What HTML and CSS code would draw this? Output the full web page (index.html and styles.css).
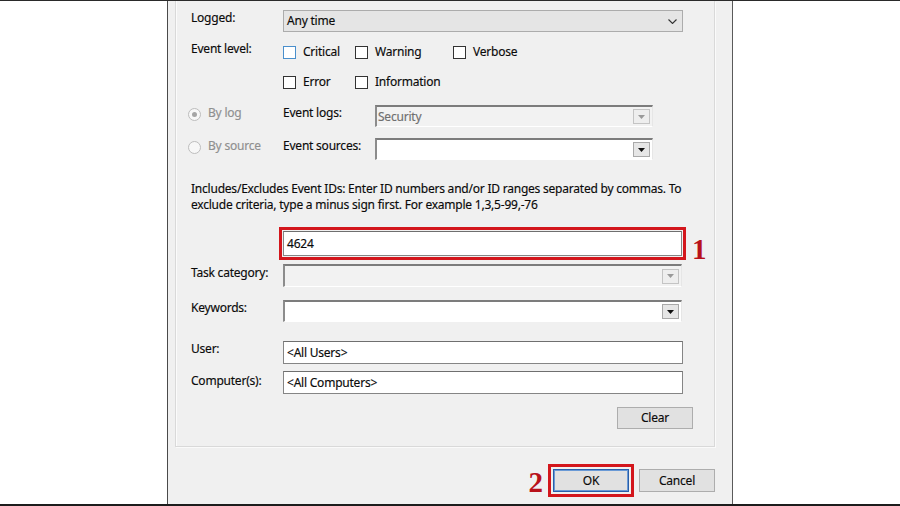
FILE: index.html
```html
<!DOCTYPE html>
<html>
<head>
<meta charset="utf-8">
<title>Filter Current Log</title>
<link rel="stylesheet" href="styles.css">
</head>
<body>
<div class="screen">
  <div class="dialog">
    <div class="panel">
      <div class="row row-logged">
        <span class="label">Logged:</span>
        <div class="combo w400 h22">
          <span class="combo-text">Any time</span>
          <svg class="chev" width="9" height="5" viewBox="0 0 9 5"><path d="M0.5 0.5 L4.5 4.5 L8.5 0.5" fill="none" stroke="#333" stroke-width="1.1"/></svg>
        </div>
      </div>

      <div class="row row-level">
        <span class="label lbl-down1">Event level:</span>
        <div class="checks">
          <label class="chk"><span class="box box-focus"></span>Critical</label>
          <label class="chk"><span class="box"></span>Warning</label>
          <label class="chk"><span class="box"></span>Verbose</label>
          <label class="chk"><span class="box"></span>Error</label>
          <label class="chk"><span class="box"></span>Information</label>
        </div>
      </div>

      <div class="row row-bylog">
        <label class="radio disabled"><span class="circle checked"></span>By log</label>
        <span class="label">Event logs:</span>
        <div class="drop drop-disabled w278">
          <span class="drop-text">Security</span>
          <span class="arrow arrow-disabled"><svg width="7" height="4" viewBox="0 0 7 4"><path d="M0 0 H7 L3.5 4 Z" fill="#9a9a9a"/></svg></span>
        </div>
      </div>

      <div class="row row-bysource">
        <label class="radio disabled"><span class="circle"></span>By source</label>
        <span class="label">Event sources:</span>
        <div class="drop w278">
          <span class="drop-text"></span>
          <span class="arrow"><svg width="7" height="4" viewBox="0 0 7 4"><path d="M0 0 H7 L3.5 4 Z" fill="#111"/></svg></span>
        </div>
      </div>

      <p class="hint">Includes/Excludes Event IDs: Enter ID numbers and/or ID ranges separated by commas. To<br>exclude criteria, type a minus sign first. For example 1,3,5-99,-76</p>

      <div class="row row-ids">
        <span class="label"></span>
        <div class="textbox w399 h25 marked">4624</div>
        <span class="step step-1">1</span>
      </div>

      <div class="row row-task">
        <span class="label lbl-down1">Task category:</span>
        <div class="drop drop-disabled w399 h23">
          <span class="drop-text"></span>
          <span class="arrow arrow-disabled"><svg width="7" height="4" viewBox="0 0 7 4"><path d="M0 0 H7 L3.5 4 Z" fill="#9a9a9a"/></svg></span>
        </div>
      </div>

      <div class="row row-keywords">
        <span class="label">Keywords:</span>
        <div class="drop w399">
          <span class="drop-text"></span>
          <span class="arrow"><svg width="7" height="4" viewBox="0 0 7 4"><path d="M0 0 H7 L3.5 4 Z" fill="#111"/></svg></span>
        </div>
      </div>

      <div class="row row-user">
        <span class="label">User:</span>
        <div class="textbox w400 h23">&lt;All Users&gt;</div>
      </div>

      <div class="row row-computer">
        <span class="label lbl-down2">Computer(s):</span>
        <div class="textbox w400 h23">&lt;All Computers&gt;</div>
      </div>

      <div class="clear-row">
        <button class="btn btn-clear">Clear</button>
      </div>
    </div>

    <div class="footer">
      <span class="step step-2">2</span>
      <button class="btn btn-ok">OK</button>
      <button class="btn">Cancel</button>
    </div>
  </div>
</div>
</body>
</html>
```

FILE: styles.css
```css
* { box-sizing: border-box; }

html, body {
  margin: 0;
  padding: 0;
  background: #ffffff;
}

body {
  font-family: "Noto Sans", "Liberation Sans", sans-serif;
  font-size: 12px;
  line-height: 16px;
  letter-spacing: -0.22px;
  color: #0a0a0a;
  -webkit-text-stroke: 0.15px currentColor;
}

.screen {
  width: 900px;
  height: 506px;
  border-top: 1px solid #2a2a2a;
  border-bottom: 2px solid #1c1c1c;
  display: flex;
  overflow: hidden;
}

.dialog {
  margin-left: 167px;
  width: 566px;
  background: #f0f0f0;
  border-left: 1px solid #4a4a4a;
  border-right: 1px solid #5a5a5a;
  display: flex;
  flex-direction: column;
}

.panel {
  margin-left: 7px;
  width: 540px;
  border: 1px solid #d9d9d9;
  border-top: none;
  box-shadow: 1px 1px 0 #fafafa, inset 1px 0 0 #fbfbfb;
  padding: 9px 0 17px 15px;
  display: flex;
  flex-direction: column;
}

.row {
  display: flex;
  align-items: flex-start;
}

.label {
  width: 92px;
  flex: none;
  white-space: nowrap;
}

.lbl-down1 { margin-top: 1px; }
.lbl-down2 { margin-top: 2px; }

.w400 { width: 400px; }
.w399 { width: 399px; }
.w278 { width: 278px; }
.h22 { height: 22px; }
.h23 { height: 23px; }
.h25 { height: 25px; }

/* Logged combo (Win10 style) */
.combo {
  flex: none;
  background: #e5e5e5;
  border: 1px solid #acacac;
  display: flex;
  align-items: center;
  justify-content: space-between;
  padding: 0 5px 0 3px;
}

.chev { display: block; }

/* Event level */
.row-level { margin-top: 8px; }

.checks {
  margin-top: 4px;
  display: grid;
  grid-template-columns: 72px 98px auto;
  row-gap: 14px;
}

.chk {
  display: flex;
  align-items: center;
  white-space: nowrap;
}

.box {
  width: 13px;
  height: 13px;
  border: 1px solid #333;
  background: #fff;
  margin-right: 7px;
  flex: none;
}

.box-focus {
  border-color: #4a8fcc;
}

/* Radio rows */
.row-bylog { margin-top: 15px; margin-left: -3px; height: 22px; }
.row-bysource { margin-top: 11px; margin-left: -3px; height: 22px; }

.radio {
  width: 95px;
  flex: none;
  display: flex;
  align-items: flex-start;
  white-space: nowrap;
}

.radio.disabled { color: #8f8f8f; }

.circle {
  width: 13px;
  height: 13px;
  border-radius: 50%;
  border: 1px solid #bdbdbd;
  background: #f7f7f7;
  margin: 3px 7px 0 0;
  flex: none;
  display: flex;
  align-items: center;
  justify-content: center;
}

.circle.checked::after {
  content: "";
  width: 5px;
  height: 5px;
  border-radius: 50%;
  background: #a5a5a5;
}

/* classic drop-down list */
.drop {
  flex: none;
  height: 22px;
  background: #ffffff;
  border-top: 2px solid #7c7c7c;
  border-left: 2px solid #8c8c8c;
  border-right: 1px solid #e6e6e6;
  border-bottom: 1px solid #ffffff;
  display: flex;
  align-items: center;
  justify-content: space-between;
  padding: 0 2px 0 1px;
}

.drop.h23 { height: 23px; }

.drop-disabled {
  background: #f2f2f2;
  color: #6f6f6f;
}

.arrow {
  width: 17px;
  height: 15px;
  border: 1px solid #a9a9a9;
  background: #e6e6e6;
  display: flex;
  align-items: center;
  justify-content: center;
}

.arrow svg { display: block; }

.arrow-disabled {
  background: #eeeeee;
  border-color: #c4c4c4;
}

/* hint paragraph */
.hint {
  margin: 21px 0 0 0;
  white-space: nowrap;
}

/* text boxes */
.textbox {
  flex: none;
  background: #fff;
  border: 1px solid #858585;
  border-top-color: #6f6f6f;
  padding: 0 3px;
  display: flex;
  align-items: center;
  white-space: nowrap;
}

.row-ids { margin-top: 18px; }

.marked {
  outline: 3px solid #d3161c;
  outline-offset: 1px;
}

.step {
  font-family: "Liberation Serif", "Times New Roman", serif;
  font-weight: bold;
  font-size: 29px;
  line-height: 25px;
  letter-spacing: 0;
  color: #b8111a;
  -webkit-text-stroke: 0;
}

.step-1 {
  margin-left: 10px;
  margin-top: 6px;
  margin-bottom: -6px;
}

.row-task { margin-top: 8px; }
.row-keywords { margin-top: 13px; }
.row-user { margin-top: 19px; }
.row-computer { margin-top: 7px; }

.clear-row {
  margin-top: 13px;
  display: flex;
  justify-content: flex-end;
  padding-right: 21px;
}

/* buttons */
.btn {
  font-family: "Noto Sans", "Liberation Sans", sans-serif;
  font-size: 12px;
  letter-spacing: -0.22px;
  -webkit-text-stroke: 0.15px currentColor;
  color: #0a0a0a;
  width: 76px;
  height: 23px;
  padding: 0;
  background: #e1e1e1;
  border: 1px solid #adadad;
  border-radius: 0;
  line-height: 16px;
}

.btn-clear { height: 22px; }

.footer {
  margin-top: 22px;
  display: flex;
  align-items: flex-start;
  justify-content: flex-end;
  padding-right: 17px;
}

.footer .btn + .btn { margin-left: 10px; }

.btn-ok {
  border: 1px solid #2a5ea8;
  box-shadow: inset 0 0 0 1px #6a9ad6;
  outline: 3px solid #d3161c;
  outline-offset: 2px;
}

.step-2 {
  margin-right: 10px;
  margin-top: 2px;
  line-height: 23px;
}
```
